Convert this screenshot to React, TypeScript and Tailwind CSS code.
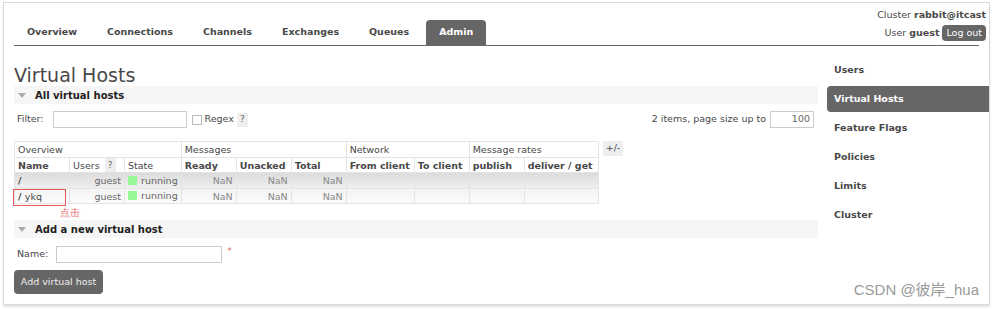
const FONT = { fontFamily: '"DejaVu Sans", Verdana, sans-serif' };

const TABS = ['Overview', 'Connections', 'Channels', 'Exchanges', 'Queues', 'Admin'];
const SIDE = ['Users', 'Virtual Hosts', 'Feature Flags', 'Policies', 'Limits', 'Cluster'];

const ROWS = [
  { name: '/', users: 'guest' },
  { name: '/ ykq', users: 'guest' },
];

function SectionBar({ title }: { title: string }) {
  return (
    <div className="flex h-[18px] items-center bg-[#f6f6f6] pl-[4px]">
      <span className="mr-[9px] h-0 w-0 border-x-[4px] border-t-[5px] border-x-transparent border-t-[#aaa]" />
      <span className="text-[10px] font-bold text-[#222]">{title}</span>
    </div>
  );
}

function HelpBox() {
  return <span className="inline-flex h-[14px] w-[11px] items-center justify-center bg-[#eee] text-[9px] text-[#666]">?</span>;
}

export default function App() {
  return (
    <div className="h-[309px] w-[993px] overflow-hidden bg-white pl-[3px] pt-[2px]" style={FONT}>
      <div className="flex h-[303px] w-[987px] flex-col border border-[#dadada] text-[#484848] shadow-[0_2px_2px_#e4e4e4]">
        {/* header */}
        <div className="mx-[10px] flex h-[43px] shrink-0 items-end justify-between border-b border-[#666]">
          <div className="flex items-end gap-[4px]">
            {TABS.map((tab) => (
              <div
                key={tab}
                className={
                  tab === 'Admin'
                    ? 'flex h-[25px] items-center rounded-t-[4px] bg-[#666] px-[13px] text-[9.5px] font-bold text-white'
                    : 'flex h-[25px] items-center px-[13px] text-[9.5px] font-bold text-[#484848]'
                }
              >
                {tab}
              </div>
            ))}
          </div>
          <div className="mr-[-7px] flex flex-col items-end self-stretch text-[9.5px]">
            <div className="mt-[5px] leading-[14px]">
              Cluster <b>rabbit@itcast</b>
            </div>
            <div className="mt-[3px] flex items-center gap-[3px] leading-[14px]">
              <span>
                User <b>guest</b>
              </span>
              <span className="rounded-[4px] bg-[#666] px-[4px] leading-[16px] text-white">Log out</span>
            </div>
          </div>
        </div>

        <div className="flex flex-1">
          {/* main */}
          <div className="ml-[10px] w-[804px]">
            <h1 className="mt-[18px] text-[19px] leading-[22px] text-[#484848]">Virtual Hosts</h1>
            <SectionBar title="All virtual hosts" />

            <div className="mt-[7px] flex h-[17px] items-center text-[9.5px]">
              <span className="ml-[3px]">Filter:</span>
              <span className="ml-[9px] h-[17px] w-[134px] border border-[#ccc] bg-white" />
              <span className="ml-[5px] h-[10px] w-[10px] border border-[#bbb] bg-white" />
              <span className="ml-[3px] mr-[3px]">Regex</span>
              <HelpBox />
              <span className="ml-auto">2 items, page size up to</span>
              <span className="ml-[4px] mr-[4px] flex h-[17px] w-[44px] items-center justify-end border border-[#ccc] pr-[3px] text-[9.5px] text-[#666]">100</span>
            </div>

            <div className="mt-[13px] flex items-start">
              <table className="border-collapse whitespace-nowrap text-[9.5px] leading-[13px]">
                <thead>
                  <tr className="h-[16px]">
                    <th colSpan={3} className="border border-[#e4e4e4] px-[3px] py-0 text-left font-normal">Overview</th>
                    <th colSpan={3} className="border border-[#e4e4e4] px-[3px] py-0 text-left font-normal">Messages</th>
                    <th colSpan={2} className="border border-[#e4e4e4] px-[3px] py-0 text-left font-normal">Network</th>
                    <th colSpan={2} className="border border-[#e4e4e4] px-[3px] py-0 text-left font-normal">Message rates</th>
                  </tr>
                  <tr className="h-[15px]">
                    <th className="w-[55px] border-x border-[#e4e4e4] px-[3px] py-0 text-left font-bold">Name</th>
                    <th className="w-[55px] border-x border-[#e4e4e4] px-[3px] py-0 text-left font-normal">
                      <span className="inline-flex items-center gap-[5px]">
                        Users <HelpBox />
                      </span>
                    </th>
                    <th className="w-[56px] border-x border-[#e4e4e4] px-[3px] py-0 text-left font-normal">State</th>
                    <th className="w-[55px] border-x border-[#e4e4e4] px-[3px] py-0 text-left font-bold">Ready</th>
                    <th className="w-[55px] border-x border-[#e4e4e4] px-[3px] py-0 text-left font-bold">Unacked</th>
                    <th className="w-[55px] border-x border-[#e4e4e4] px-[3px] py-0 text-left font-bold">Total</th>
                    <th className="w-[68px] border-x border-[#e4e4e4] px-[3px] py-0 text-left font-bold">From client</th>
                    <th className="w-[55px] border-x border-[#e4e4e4] px-[3px] py-0 text-left font-bold">To client</th>
                    <th className="w-[55px] border-x border-[#e4e4e4] px-[3px] py-0 text-left font-bold">publish</th>
                    <th className="w-[74px] border-x border-[#e4e4e4] px-[3px] py-0 text-left font-bold">deliver / get</th>
                  </tr>
                </thead>
                <tbody>
                  {ROWS.map((row, i) => (
                    <tr
                      key={row.name}
                      className={i === 0 ? 'h-[16px] bg-gradient-to-b from-[#dcdcdc] to-[#f0f0f0]' : 'h-[15px] bg-gradient-to-b from-[#f4f4f4] to-[#fbfbfb]'}
                    >
                      <td className="border border-[#e4e4e4] px-[3px] py-0 font-bold">
                        {i === 1 ? (
                          <span className="relative">
                            / <span className="font-normal">ykq</span>
                            <span className="absolute left-[-5px] top-[-2px] h-[17px] w-[53px] border border-[#ea5a5a]" />
                            <span className="absolute left-[42px] top-[17px] whitespace-nowrap text-[10px] leading-[10px] font-normal text-[#e46a6a]">点击</span>
                          </span>
                        ) : (
                          row.name
                        )}
                      </td>
                      <td className="border border-[#e4e4e4] px-[3px] py-0 text-right text-[#666]">{row.users}</td>
                      <td className="border border-[#e4e4e4] px-[3px] py-0">
                        <span className="inline-flex items-center gap-[4px] text-[#666]">
                          <span className="h-[9px] w-[9px] bg-[#98f898]" />
                          running
                        </span>
                      </td>
                      <td className="border border-[#e4e4e4] px-[3px] py-0 text-right text-[#888]">NaN</td>
                      <td className="border border-[#e4e4e4] px-[3px] py-0 text-right text-[#888]">NaN</td>
                      <td className="border border-[#e4e4e4] px-[3px] py-0 text-right text-[#888]">NaN</td>
                      <td className="border border-[#e4e4e4]" />
                      <td className="border border-[#e4e4e4]" />
                      <td className="border border-[#e4e4e4]" />
                      <td className="border border-[#e4e4e4]" />
                    </tr>
                  ))}
                </tbody>
              </table>
              <span className="ml-[4px] flex h-[15px] items-center bg-[#eee] px-[3px] text-[9.5px]">+/-</span>
            </div>

            <div className="mt-[16px]">
              <SectionBar title="Add a new virtual host" />
            </div>

            <div className="mt-[8px] flex h-[17px] items-center text-[9.5px]">
              <span className="ml-[3px]">Name:</span>
              <span className="ml-[8px] h-[17px] w-[166px] border border-[#ccc] bg-white" />
              <span className="ml-[5px] self-start text-[9px] leading-[10px] text-[#e46a6a]">*</span>
            </div>

            <div className="mt-[7px] flex h-[24px] w-[89px] items-center justify-center rounded-[4px] bg-[#666] text-[9.5px] text-[#eee]">
              Add virtual host
            </div>
          </div>

          {/* sidebar */}
          <div className="ml-[9px] flex flex-1 flex-col pt-[11px]">
            {SIDE.map((item) => (
              <div
                key={item}
                className={
                  item === 'Virtual Hosts'
                    ? 'mb-[3px] flex h-[26px] items-center rounded-l-[4px] bg-[#666] pl-[7px] text-[9.5px] font-bold text-white'
                    : 'mb-[3px] flex h-[26px] items-center pl-[7px] text-[9.5px] font-bold text-[#484848]'
                }
              >
                {item}
              </div>
            ))}
            <div className="mt-auto mb-[5px] pr-[10px] text-right text-[15px] leading-[18px] text-[#9a9a9a]" style={{ fontFamily: '"Liberation Sans", "Noto Sans CJK SC", sans-serif' }}>
              CSDN @彼岸_hua
            </div>
          </div>
        </div>
      </div>
    </div>
  );
}
